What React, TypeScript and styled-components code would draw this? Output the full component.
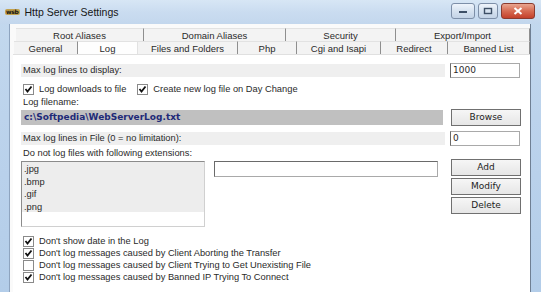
import React from "react";
import styled, { createGlobalStyle } from "styled-components";

const GlobalStyle = createGlobalStyle`
  html, body {
    margin: 0;
    padding: 0;
    background: #fff;
  }
  body {
    font-family: "Liberation Sans", Arial, sans-serif;
  }
`;

const topTabs = [
  { label: "Root Aliases", width: 128 },
  { label: "Domain Aliases", width: 142 },
  { label: "Security", width: 110 },
  { label: "Export/Import", width: 134 },
];

const bottomTabs = [
  { label: "General", width: 64 },
  { label: "Log", width: 60, active: true },
  { label: "Files and Folders", width: 100 },
  { label: "Php", width: 59 },
  { label: "Cgi and Isapi", width: 84 },
  { label: "Redirect", width: 67 },
  { label: "Banned List", width: 82 },
];

const extensions = [".jpg", ".bmp", ".gif", ".png"];

const options = [
  { label: "Don't show date in the Log", checked: true },
  { label: "Don't log messages caused by Client Aborting the Transfer", checked: true },
  { label: "Don't log messages caused by Client Trying to Get Unexisting File", checked: false },
  { label: "Don't log messages caused by Banned IP Trying To Connect", checked: true },
];

const CheckBox: React.FC<{ checked: boolean }> = ({ checked }) => (
  <Box>
    {checked && (
      <svg width="9" height="9" viewBox="0 0 9 9">
        <path d="M1.5 4 L3.5 6.5 L7.5 1.5" stroke="#111" strokeWidth="1.8" fill="none" />
      </svg>
    )}
  </Box>
);

const App: React.FC = () => {
  return (
    <>
      <GlobalStyle />
      <Window>
        <TitleBar>
          <AppIcon>wsb</AppIcon>
          <Title>Http Server Settings</Title>
          <Controls>
            <CtrlButton $w={22}>
              <svg width="10" height="6" viewBox="0 0 10 6">
                <rect x="1" y="3" width="8" height="2" fill="#3d4f66" />
              </svg>
            </CtrlButton>
            <CtrlButton $w={18}>
              <svg width="10" height="8" viewBox="0 0 10 8">
                <rect x="1.5" y="1.5" width="7" height="5" fill="none" stroke="#3d4f66" strokeWidth="1.4" />
              </svg>
            </CtrlButton>
            <CloseButton>
              <svg width="10" height="8" viewBox="0 0 10 8">
                <path d="M1.5 1 L8.5 7 M8.5 1 L1.5 7" stroke="#fff" strokeWidth="2" />
              </svg>
            </CloseButton>
          </Controls>
        </TitleBar>
        <Client>
          <TabRow $indent={6}>
            {topTabs.map((t) => (
              <Tab key={t.label} $w={t.width}>{t.label}</Tab>
            ))}
          </TabRow>
          <TabRow $indent={4}>
            {bottomTabs.map((t) => (
              <Tab key={t.label} $w={t.width} $active={t.active}>{t.label}</Tab>
            ))}
          </TabRow>
          <Panel>
            <FieldRow>
              <Band>Max log lines to display:</Band>
              <Input>1000</Input>
            </FieldRow>
            <CheckRow>
              <Check><CheckBox checked />Log downloads to file</Check>
              <Check><CheckBox checked />Create new log file on Day Change</Check>
            </CheckRow>
            <Label>Log filename:</Label>
            <FieldRow>
              <FileField>c:\Softpedia\WebServerLog.txt</FileField>
              <Button>Browse</Button>
            </FieldRow>
            <FieldRow $top={5}>
              <Band>Max log lines in File (0 = no limitation):</Band>
              <Input>0</Input>
            </FieldRow>
            <Label>Do not log files with following extensions:</Label>
            <ExtArea>
              <ListBox>
                {extensions.map((e) => (
                  <ListItem key={e}>{e}</ListItem>
                ))}
              </ListBox>
              <ExtInput />
              <ButtonStack>
                <Button>Add</Button>
                <Button>Modify</Button>
                <Button>Delete</Button>
              </ButtonStack>
            </ExtArea>
            <Options>
              {options.map((o) => (
                <Check key={o.label}>
                  <CheckBox checked={o.checked} />
                  {o.label}
                </Check>
              ))}
            </Options>
          </Panel>
        </Client>
      </Window>
    </>
  );
};

const Window = styled.div`
  width: 541px;
  height: 292px;
  display: flex;
  flex-direction: column;
  background: linear-gradient(to bottom, #c4d9ee 0%, #bcd3ec 40%, #b3cde9 100%);
  overflow: hidden;
`;

const TitleBar = styled.div`
  height: 24px;
  flex: none;
  display: flex;
  align-items: center;
  padding: 0 6px 0 5px;
  background: linear-gradient(to bottom, #d7e6f5 0%, #cadcf0 50%, #c3d7ed 100%);
`;

const AppIcon = styled.span`
  font-family: "DejaVu Sans", sans-serif;
  font-size: 6px;
  font-weight: bold;
  color: #111;
  background: #c2a24e;
  border-radius: 2px;
  padding: 0 1px;
  line-height: 6px;
  margin-right: 5px;
  letter-spacing: -0.3px;
`;

const Title = styled.span`
  font-family: "Liberation Sans", Arial, sans-serif;
  font-size: 10.5px;
  color: #161616;
  flex: 1;
`;

const Controls = styled.div`
  display: flex;
  gap: 3px;
  align-self: flex-start;
  margin-top: 3px;
`;

const CtrlButton = styled.div<{ $w: number }>`
  width: ${(p) => p.$w}px;
  height: 14px;
  border: 1px solid #7d8fa8;
  border-radius: 3px;
  background: linear-gradient(to bottom, #eef4fb 0%, #d6e2f0 50%, #c3d3e6 100%);
  display: flex;
  align-items: center;
  justify-content: center;
`;

const CloseButton = styled.div`
  width: 32px;
  height: 14px;
  border: 1px solid #8a3b2f;
  border-radius: 3px;
  background: linear-gradient(to bottom, #e9a590 0%, #d66b52 50%, #c4402a 100%);
  display: flex;
  align-items: center;
  justify-content: center;
`;

const Client = styled.div`
  flex: 1;
  margin: 0 10px 0 9px;
  background: #fafafa;
  border-left: 1px solid #8ea4bf;
  border-right: 1px solid #6f7f93;
  display: flex;
  flex-direction: column;
  padding-top: 4px;
  font-family: "Liberation Sans", Arial, sans-serif;
  font-size: 9.3px;
  color: #2a2a2a;
`;

const TabRow = styled.div<{ $indent: number }>`
  display: flex;
  height: 13px;
  padding-left: ${(p) => p.$indent}px;
`;

const Tab = styled.div<{ $w: number; $active?: boolean }>`
  width: ${(p) => p.$w}px;
  flex: none;
  display: flex;
  align-items: center;
  justify-content: center;
  background: ${(p) => (p.$active ? "#fefefe" : "#f3f3f3")};
  border-top: 1px solid #e2e2e2;
  border-right: 1px solid ${(p) => (p.$active ? "#e2e2e2" : "#8e8e8e")};
  font-size: 9.5px;
  color: #2a2a2a;
  box-sizing: border-box;
`;

const Panel = styled.div`
  flex: 1;
  background: #fff;
  border-top: 1px solid #e0e0e0;
  margin: 0 0 0 3px;
  padding: 8px 8px 0 8px;
  display: flex;
  flex-direction: column;
`;

const FieldRow = styled.div<{ $top?: number }>`
  display: flex;
  align-items: center;
  gap: 5px;
  margin-top: ${(p) => p.$top ?? 0}px;
`;

const Band = styled.div`
  flex: 1;
  background: #efefef;
  height: 13px;
  line-height: 13px;
  padding-left: 2px;
`;

const Input = styled.div`
  width: 66px;
  height: 13px;
  line-height: 13px;
  border: 1px solid #a9a9a9;
  border-left-color: #6a6a6a;
  background: #fff;
  padding-left: 2px;
  margin-right: 2px;
  font-family: "DejaVu Sans", sans-serif;
  font-size: 9px;
`;

const CheckRow = styled.div`
  display: flex;
  gap: 9px;
  margin-top: 5px;
`;

const Box = styled.span`
  width: 9px;
  height: 9px;
  border: 1px solid #8a8a8a;
  background: #fff;
  display: inline-flex;
  align-items: center;
  justify-content: center;
  margin-right: 5px;
  flex: none;
`;

const Check = styled.div`
  display: flex;
  align-items: center;
  height: 12px;
  padding-left: 2px;
`;

const Label = styled.div`
  margin-top: 1px;
  height: 13px;
  line-height: 13px;
  padding-left: 2px;
`;

const FileField = styled.div`
  flex: 1;
  height: 15px;
  line-height: 15px;
  background: #c0c0c0;
  padding-left: 3px;
  margin-right: 3px;
  font-family: "DejaVu Sans", sans-serif;
  font-weight: bold;
  font-size: 9px;
  color: #1e2a78;
`;

const Button = styled.div`
  width: 68px;
  height: 15px;
  line-height: 15px;
  text-align: center;
  border: 1px solid #707070;
  background: linear-gradient(to bottom, #f6f6f6, #e6e6e6);
  font-family: "DejaVu Sans", sans-serif;
  font-size: 9px;
  color: #222;
  margin-right: 1px;
`;

const ExtArea = styled.div`
  display: flex;
  align-items: flex-start;
  margin-top: 1px;
`;

const ListBox = styled.div`
  width: 184px;
  height: 66px;
  border: 1px solid #8b8b8b;
  border-right-color: #d0d0d0;
  border-bottom-color: #d0d0d0;
  background: linear-gradient(to bottom, #ededed 0, #ededed 50px, #fff 50px);
  padding-top: 1px;
  box-sizing: border-box;
`;

const ListItem = styled.div`
  height: 12.5px;
  line-height: 12.5px;
  padding-left: 2px;
`;

const ExtInput = styled.div`
  width: 222px;
  height: 14px;
  margin-left: 9px;
  border: 1px solid #a9a9a9;
  border-left-color: #6a6a6a;
  border-top-color: #6a6a6a;
  background: #fff;
`;

const ButtonStack = styled.div`
  display: flex;
  flex-direction: column;
  gap: 2px;
  margin-left: auto;
  margin-top: -2px;
`;

const Options = styled.div`
  display: flex;
  flex-direction: column;
  margin-top: 8px;
`;

export default App;
